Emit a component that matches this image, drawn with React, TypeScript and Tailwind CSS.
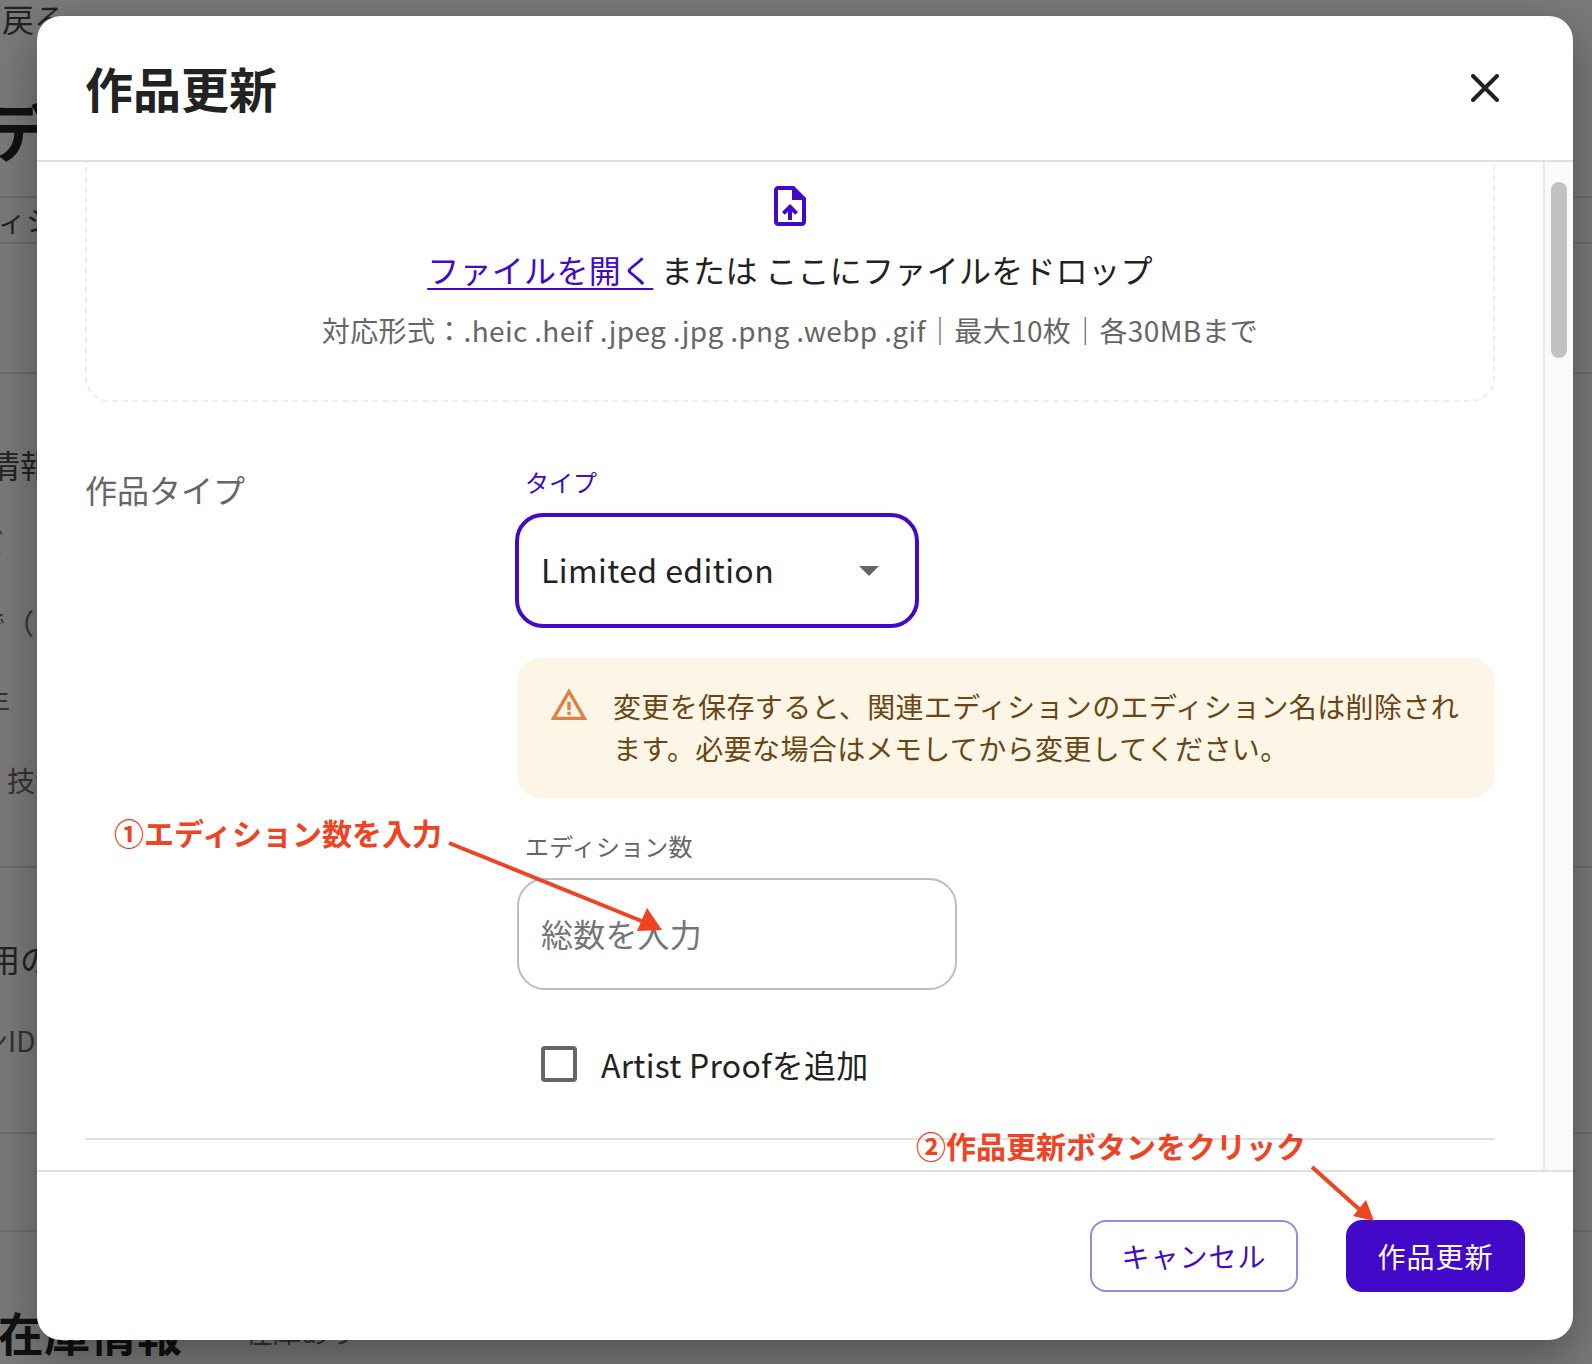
import React from 'react';

const FONT = "font-['Noto_Sans_CJK_JP','Noto_Sans',sans-serif]";

function BackgroundPage() {
  return (
    <div className="flex flex-col text-[#222]">
      <div className="h-[36px] flex items-center pl-[2px] text-[32px] leading-none">戻る</div>
      <div className="h-[162px] pt-[24px] flex items-center -ml-[14px] text-[64px] leading-none font-bold text-[#111] border-b-2 border-[#6c6c6c] whitespace-nowrap">データ</div>
      <div className="h-[46px] flex items-center -ml-[2px] text-[28px] leading-none border-b-2 border-[#6c6c6c] whitespace-nowrap">ィション</div>
      <div className="h-[130px] border-b-2 border-[#6c6c6c]" />
      <div className="h-[494px] border-b-2 border-[#6c6c6c] flex flex-col">
        <div className="mt-[30px] h-[120px] flex items-center -ml-[12px] text-[32px] leading-none whitespace-nowrap">情報</div>
        <div className="h-[38px] flex items-center -ml-[24px] text-[28px] leading-none text-[#333] whitespace-nowrap">ズ</div>
        <div className="h-[122px] flex items-center -ml-[22px] text-[28px] leading-none text-[#333] whitespace-nowrap">で（</div>
        <div className="h-[36px] flex items-center -ml-[18px] text-[28px] leading-none text-[#333] whitespace-nowrap">年</div>
        <div className="h-[120px] flex items-center pl-[7px] text-[28px] leading-none text-[#333] whitespace-nowrap">技法</div>
      </div>
      <div className="h-[266px] border-b-2 border-[#6c6c6c] flex flex-col">
        <div className="mt-[40px] h-[100px] flex items-center -ml-[12px] text-[32px] leading-none whitespace-nowrap">用の</div>
        <div className="h-[64px] flex items-center -ml-[20px] text-[28px] leading-none text-[#333] whitespace-nowrap">ンID</div>
      </div>
      <div className="h-[98px] border-b-2 border-[#6c6c6c]" />
      <div className="pt-[76px] flex items-center gap-[63px] -ml-[2px] whitespace-nowrap">
        <span className="text-[46px] leading-none font-bold text-[#111]">在庫情報</span>
        <span className="text-[28px] leading-none text-[#333]">在庫あり</span>
      </div>
    </div>
  );
}

function UploadIcon() {
  return (
    <svg viewBox="0 0 24 24" className="w-[48px] h-[48px] fill-[#4309c8]">
      <path d="M14 2H6c-1.1 0-1.99.9-1.99 2L4 20c0 1.1.89 2 1.99 2H18c1.1 0 2-.9 2-2V8l-6-6zm4 18H6V4h7v5h5v11zM8 15.01l1.41 1.41L11 14.84V19h2v-4.16l1.59 1.59L16 15.01 12.01 11 8 15.01z" />
    </svg>
  );
}

function WarningIcon() {
  return (
    <svg viewBox="0 0 24 24" className="w-[40px] h-[40px] fill-[#e08142] shrink-0">
      <path d="M12 5.99 19.53 19H4.47L12 5.99M12 2 1 21h22L12 2zm1 14h-2v2h2v-2zm0-6h-2v5h2v-5z" />
    </svg>
  );
}

function Dialog() {
  return (
    <div className="absolute left-[37px] top-[16px] w-[1536px] h-[1324px] bg-white rounded-[24px] flex flex-col overflow-hidden shadow-[0_16px_48px_rgba(0,0,0,0.35)]">
      {/* ヘッダー */}
      <div className="h-[146px] shrink-0 border-b-2 border-[#e0e0e0] flex items-center justify-between pl-[48px] pr-[74px]">
        <h1 className="text-[48px] leading-none font-bold text-[#222] -mt-[2px]">作品更新</h1>
        <svg viewBox="0 0 28 28" className="w-[28px] h-[28px] stroke-[#222]" strokeWidth="4" strokeLinecap="round">
          <path d="M2 2 26 26M26 2 2 26" />
        </svg>
      </div>

      {/* 本体 */}
      <div className="flex-1 min-h-0 flex">
        <div className="flex-1 min-w-0 overflow-hidden px-[48px]">
          <div className="h-[240px] border-2 border-t-0 border-dashed border-[#eeeeee] rounded-b-[24px] flex flex-col items-center pt-[20px]">
            <UploadIcon />
            <p className="mt-[15px] text-[32px] leading-[48px] tracking-[0.3px] text-[#222]">
              <span className="text-[#4309c8] underline decoration-2 underline-offset-[5px]">ファイルを開く</span> または ここにファイルをドロップ
            </p>
            <p className="mt-[16px] text-[28px] leading-[42px] tracking-[0.35px] text-[#666]">
              対応形式：.heic .heif .jpeg .jpg .png .webp .gif｜最大10枚｜各30MBまで
            </p>
          </div>

          <div className="flex mt-[59px]">
            <div className="w-[432px] shrink-0 text-[32px] leading-[48px] text-[#666] pt-[4px]">作品タイプ</div>
            <div className="flex-1 min-w-0 pt-[3px]">
              <div className="text-[24px] leading-[36px] text-[#4309c8] pl-[8px]">タイプ</div>
              <div className="mt-[13px] -ml-[2px] w-[404px] h-[115px] border-[4px] border-[#4309c8] rounded-[28px] flex items-center justify-between pl-[22px] pr-[36px] text-[32px] tracking-[0.4px] text-[#222]">
                <span className="-mt-[3px]">Limited edition</span>
                <svg viewBox="0 0 20 10" className="w-[20px] h-[10px] fill-[#666]">
                  <path d="M0 0H20L10 10Z" />
                </svg>
              </div>

              <div className="mt-[30px] h-[140px] bg-[#fdf5e6] rounded-[24px] flex pl-[32px] pr-[24px] pt-[27px]">
                <WarningIcon />
                <p className="ml-[24px] text-[28px] leading-[42px] tracking-[0.37px] text-[#6b4513]">
                  変更を保存すると、関連エディションのエディション名は削除されます。必要な場合はメモしてから変更してください。
                </p>
              </div>

              <div className="mt-[30px] text-[24px] leading-[36px] tracking-[0.2px] text-[#666] pl-[8px]">エディション数</div>
              <div className="mt-[14px] w-[440px] h-[112px] border-2 border-[#bdbdbd] rounded-[28px] flex items-center pl-[22px] pb-[2px] text-[32px] tracking-[0.2px] text-[#757575]">
                総数を入力
              </div>

              <div className="mt-[50px] flex items-center pl-[24px]">
                <span className="w-[36px] h-[36px] border-[4px] border-[#666] rounded-[4px]" />
                <span className="ml-[24px] text-[32px] leading-[48px] tracking-[0.25px] text-[#222]">Artist Proofを追加</span>
              </div>
            </div>
          </div>

          <div className="mt-[50px] border-t-2 border-[#e0e0e0]" />
        </div>

        {/* スクロールバー */}
        <div className="w-[30px] shrink-0 bg-[#fafafa] border-l-2 border-[#e8e8e8] pt-[20px] pl-[6px]">
          <div className="w-[16px] h-[176px] rounded-full bg-[#c1c1c1]" />
        </div>
      </div>

      {/* フッター */}
      <div className="h-[170px] shrink-0 border-t-2 border-[#e0e0e0] flex justify-end gap-[48px] pr-[48px] pt-[48px]">
        <button className="w-[208px] h-[72px] rounded-[16px] border-2 border-[#a083e2] text-[#4309c8] text-[28px] tracking-[1px] bg-white">キャンセル</button>
        <button className="w-[179px] h-[72px] rounded-[16px] bg-[#4309c8] text-white text-[28px] tracking-[1px]">作品更新</button>
      </div>
    </div>
  );
}

// 赤い注釈(矢印とテキスト)
function Annotations() {
  return (
    <>
      <div className="absolute left-[114px] top-[809px] text-[30px] leading-[46px] font-bold text-[#ee4423] whitespace-nowrap">①エディション数を入力</div>
      <div className="absolute left-[916px] top-[1122px] text-[30px] leading-[46px] font-bold text-[#ee4423] whitespace-nowrap">②作品更新ボタンをクリック</div>
      <svg className="absolute inset-0 w-[1592px] h-[1364px] pointer-events-none" viewBox="0 0 1592 1364">
        <path d="M449 843 644 922" stroke="#ee4423" strokeWidth="4" fill="none" />
        <path d="M662 930 637 931 647 908Z" fill="#ee4423" />
        <path d="M1312 1167 1360 1210" stroke="#ee4423" strokeWidth="4" fill="none" />
        <path d="M1374 1221 1353 1216 1366 1200Z" fill="#ee4423" />
      </svg>
    </>
  );
}

export default function App() {
  return (
    <div className={`relative w-[1592px] h-[1364px] overflow-hidden bg-[#7a7a7a] ${FONT}`}>
      <BackgroundPage />
      <Dialog />
      <Annotations />
    </div>
  );
}
